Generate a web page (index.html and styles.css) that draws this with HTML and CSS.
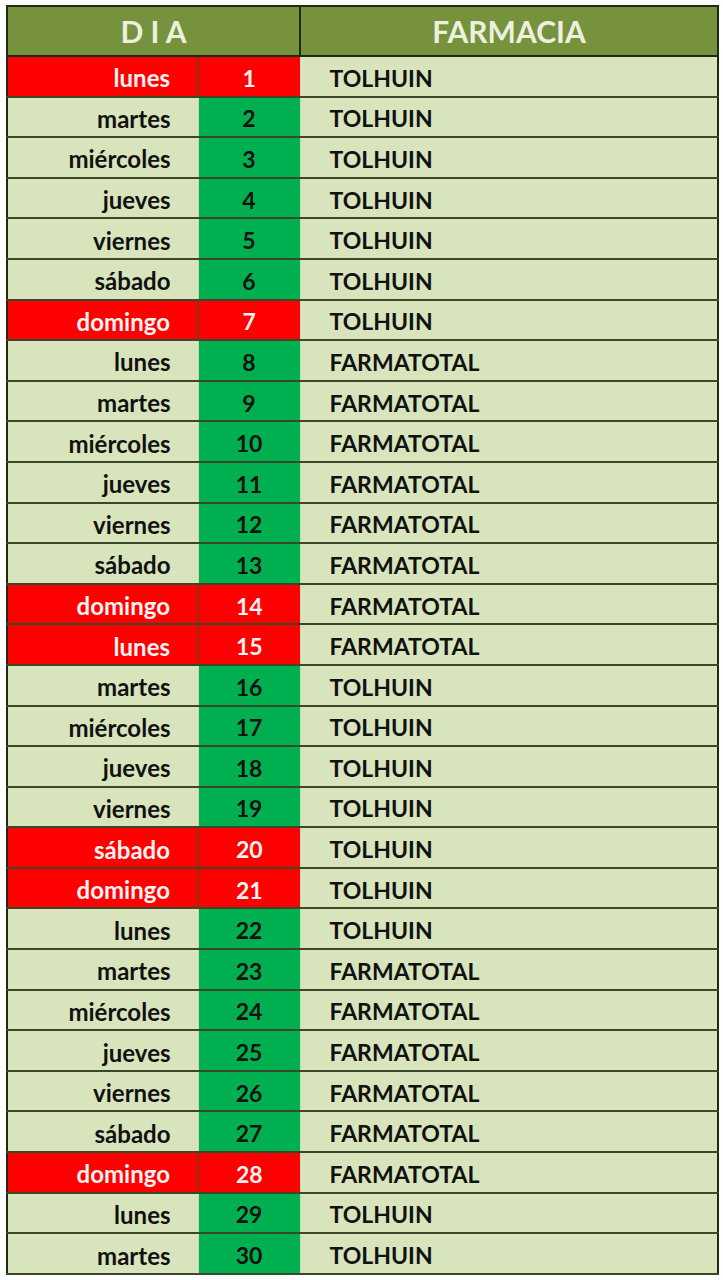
FILE: index.html
```html
<!DOCTYPE html>
<html lang="es">
<head>
<meta charset="utf-8">
<title>Turnos farmacias</title>
<link rel="stylesheet" href="styles.css">
</head>
<body>
<div class="page">
<table class="turnos">
<colgroup><col class="c-day"><col class="c-num"><col class="c-farm"></colgroup>
<thead>
<tr><th colspan="2" class="h-dia">D I A</th><th class="h-farm">FARMACIA</th></tr>
</thead>
<tbody>
<tr class="hol"><td class="day">lunes</td><td class="num">1</td><td class="farm">TOLHUIN</td></tr>
<tr><td class="day">martes</td><td class="num">2</td><td class="farm">TOLHUIN</td></tr>
<tr><td class="day">miércoles</td><td class="num">3</td><td class="farm">TOLHUIN</td></tr>
<tr><td class="day">jueves</td><td class="num">4</td><td class="farm">TOLHUIN</td></tr>
<tr><td class="day">viernes</td><td class="num">5</td><td class="farm">TOLHUIN</td></tr>
<tr><td class="day">sábado</td><td class="num">6</td><td class="farm">TOLHUIN</td></tr>
<tr class="hol"><td class="day">domingo</td><td class="num">7</td><td class="farm">TOLHUIN</td></tr>
<tr><td class="day">lunes</td><td class="num">8</td><td class="farm">FARMATOTAL</td></tr>
<tr><td class="day">martes</td><td class="num">9</td><td class="farm">FARMATOTAL</td></tr>
<tr><td class="day">miércoles</td><td class="num">10</td><td class="farm">FARMATOTAL</td></tr>
<tr><td class="day">jueves</td><td class="num">11</td><td class="farm">FARMATOTAL</td></tr>
<tr><td class="day">viernes</td><td class="num">12</td><td class="farm">FARMATOTAL</td></tr>
<tr><td class="day">sábado</td><td class="num">13</td><td class="farm">FARMATOTAL</td></tr>
<tr class="hol"><td class="day">domingo</td><td class="num">14</td><td class="farm">FARMATOTAL</td></tr>
<tr class="hol"><td class="day">lunes</td><td class="num">15</td><td class="farm">FARMATOTAL</td></tr>
<tr><td class="day">martes</td><td class="num">16</td><td class="farm">TOLHUIN</td></tr>
<tr><td class="day">miércoles</td><td class="num">17</td><td class="farm">TOLHUIN</td></tr>
<tr><td class="day">jueves</td><td class="num">18</td><td class="farm">TOLHUIN</td></tr>
<tr><td class="day">viernes</td><td class="num">19</td><td class="farm">TOLHUIN</td></tr>
<tr class="hol"><td class="day">sábado</td><td class="num">20</td><td class="farm">TOLHUIN</td></tr>
<tr class="hol"><td class="day">domingo</td><td class="num">21</td><td class="farm">TOLHUIN</td></tr>
<tr><td class="day">lunes</td><td class="num">22</td><td class="farm">TOLHUIN</td></tr>
<tr><td class="day">martes</td><td class="num">23</td><td class="farm">FARMATOTAL</td></tr>
<tr><td class="day">miércoles</td><td class="num">24</td><td class="farm">FARMATOTAL</td></tr>
<tr><td class="day">jueves</td><td class="num">25</td><td class="farm">FARMATOTAL</td></tr>
<tr><td class="day">viernes</td><td class="num">26</td><td class="farm">FARMATOTAL</td></tr>
<tr><td class="day">sábado</td><td class="num">27</td><td class="farm">FARMATOTAL</td></tr>
<tr class="hol"><td class="day">domingo</td><td class="num">28</td><td class="farm">FARMATOTAL</td></tr>
<tr><td class="day">lunes</td><td class="num">29</td><td class="farm">TOLHUIN</td></tr>
<tr><td class="day">martes</td><td class="num">30</td><td class="farm">TOLHUIN</td></tr>
</tbody>
</table>
</div>
</body>
</html>
```
FILE: styles.css
```css
html, body {
  margin: 0;
  padding: 0;
  background: #ffffff;
}
.page {
  padding: 5px 6px 0 6px;
}
.turnos {
  width: 711px;
  border-collapse: collapse;
  table-layout: fixed;
  font-family: Lato, "Liberation Sans", sans-serif;
  font-weight: 700;
  border: 2px solid #1f2a16;
}
.c-day { width: 191px; }
.c-num { width: 102px; }
.c-farm { width: 418px; }
.turnos thead th {
  height: 48px;
  padding: 0;
  background: #76923c;
  color: #ebf1de;
  font-size: 30px;
  font-weight: 700;
  text-align: center;
  border: 2px solid #1f2a16;
}
.h-dia { letter-spacing: 0; padding-right: 4px; }
.turnos tbody tr { height: 40.6px; }
.turnos td {
  padding: 0;
  background: #d8e4bc;
  color: #111111;
  font-size: 23px;
  border-top: 2px solid #3a4729;
  border-bottom: 2px solid #3a4729;
  line-height: 1;
  padding-top: 4px;
}
.turnos td.day {
  text-align: right;
  padding-right: 27px;
  border-right: 1px solid #c6d6a8;
  font-size: 24px;
}
.turnos td.num {
  text-align: center;
  background: #00b050;
  border-right: 1px solid #bfe0b0;
}
.turnos td.farm {
  text-align: left;
  padding-left: 29px;
}
.turnos tr.hol td.day,
.turnos tr.hol td.num {
  background: #ff0000;
  color: #fff2f2;
}
.turnos tr.hol td.day {
  border-right: 2px solid #7a3a1a;
}
```
